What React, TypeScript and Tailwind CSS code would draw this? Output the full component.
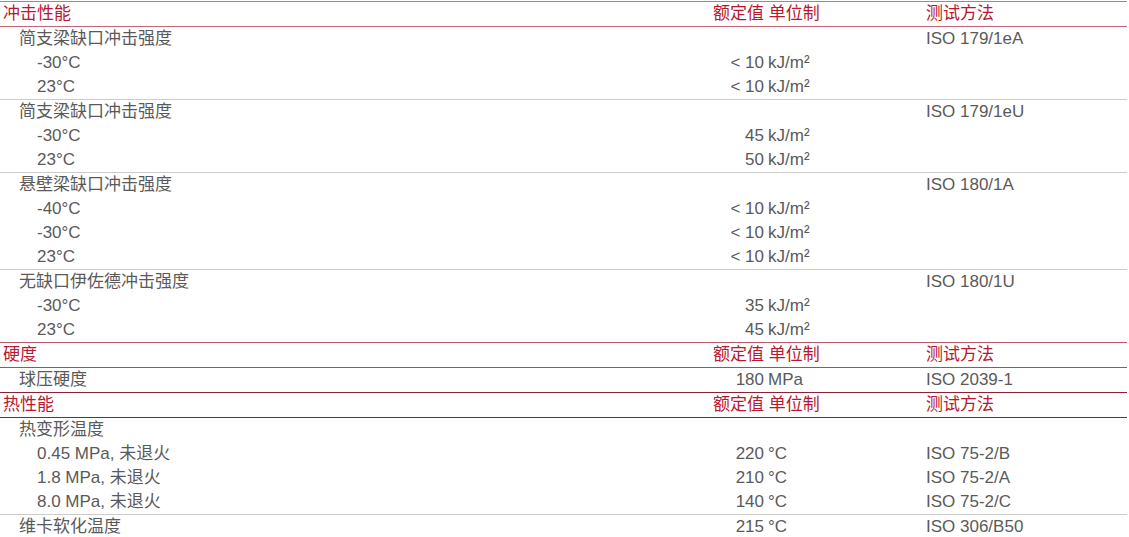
type Row = {
  kind: 'head' | 'item'
  label: string
  indent?: 0 | 1 | 2
  num?: string
  unit?: string
  method?: string
  line?: string
}

const rows: Row[] = [
  { kind: 'head', label: '冲击性能', line: 'border-[#c46476]' },
  { kind: 'item', label: '简支梁缺口冲击强度', indent: 1, method: 'ISO 179/1eA' },
  { kind: 'item', label: '-30°C', indent: 2, num: '< 10', unit: 'kJ/m²' },
  { kind: 'item', label: '23°C', indent: 2, num: '< 10', unit: 'kJ/m²', line: 'border-[#cccccc]' },
  { kind: 'item', label: '简支梁缺口冲击强度', indent: 1, method: 'ISO 179/1eU' },
  { kind: 'item', label: '-30°C', indent: 2, num: '45', unit: 'kJ/m²' },
  { kind: 'item', label: '23°C', indent: 2, num: '50', unit: 'kJ/m²', line: 'border-[#cccccc]' },
  { kind: 'item', label: '悬壁梁缺口冲击强度', indent: 1, method: 'ISO 180/1A' },
  { kind: 'item', label: '-40°C', indent: 2, num: '< 10', unit: 'kJ/m²' },
  { kind: 'item', label: '-30°C', indent: 2, num: '< 10', unit: 'kJ/m²' },
  { kind: 'item', label: '23°C', indent: 2, num: '< 10', unit: 'kJ/m²', line: 'border-[#cccccc]' },
  { kind: 'item', label: '无缺口伊佐德冲击强度', indent: 1, method: 'ISO 180/1U' },
  { kind: 'item', label: '-30°C', indent: 2, num: '35', unit: 'kJ/m²' },
  { kind: 'item', label: '23°C', indent: 2, num: '45', unit: 'kJ/m²', line: 'border-[#c0596c]' },
  { kind: 'head', label: '硬度', line: 'border-[#b5475c]' },
  { kind: 'item', label: '球压硬度', indent: 1, num: '180', unit: 'MPa', method: 'ISO 2039-1', line: 'border-[#8e2035]' },
  { kind: 'head', label: '热性能', line: 'border-[#8e2035]' },
  { kind: 'item', label: '热变形温度', indent: 1 },
  { kind: 'item', label: '0.45 MPa, 未退火', indent: 2, num: '220', unit: '°C', method: 'ISO 75-2/B' },
  { kind: 'item', label: '1.8 MPa, 未退火', indent: 2, num: '210', unit: '°C', method: 'ISO 75-2/A' },
  { kind: 'item', label: '8.0 MPa, 未退火', indent: 2, num: '140', unit: '°C', method: 'ISO 75-2/C', line: 'border-[#cccccc]' },
  { kind: 'item', label: '维卡软化温度', indent: 1, num: '215', unit: '°C', method: 'ISO 306/B50' },
]

const indentClass = ['pl-[3px]', 'pl-[19px]', 'pl-[37px]']

export default function App() {
  return (
    <div className="bg-white w-[1129px] h-[537px] overflow-hidden pt-px">
      <div
        className="w-[1127px] border-t border-[#c97384] text-[17px] leading-6 text-[#5a5a5a]"
        style={{ fontFamily: '"Liberation Sans", Arial, "Noto Sans CJK SC", sans-serif' }}
      >
        {rows.map((r, i) => (
          <div
            key={i}
            className={`grid grid-cols-[713px_51px_162px_1fr] h-6 whitespace-nowrap box-content ${r.line ? 'border-b ' + r.line : ''}`}
          >
            {r.kind === 'head' ? (
              <>
                <div className="pl-[3px] text-[#b81830]">{r.label}</div>
                <div className="col-span-2 text-[#b81830]">额定值 单位制</div>
                <div className="text-[#b81830]">测试方法</div>
              </>
            ) : (
              <>
                <div className={indentClass[r.indent ?? 0]}>{r.label}</div>
                <div className="text-right">{r.num}</div>
                <div className="pl-1">{r.unit}</div>
                <div>{r.method}</div>
              </>
            )}
          </div>
        ))}
      </div>
    </div>
  )
}
